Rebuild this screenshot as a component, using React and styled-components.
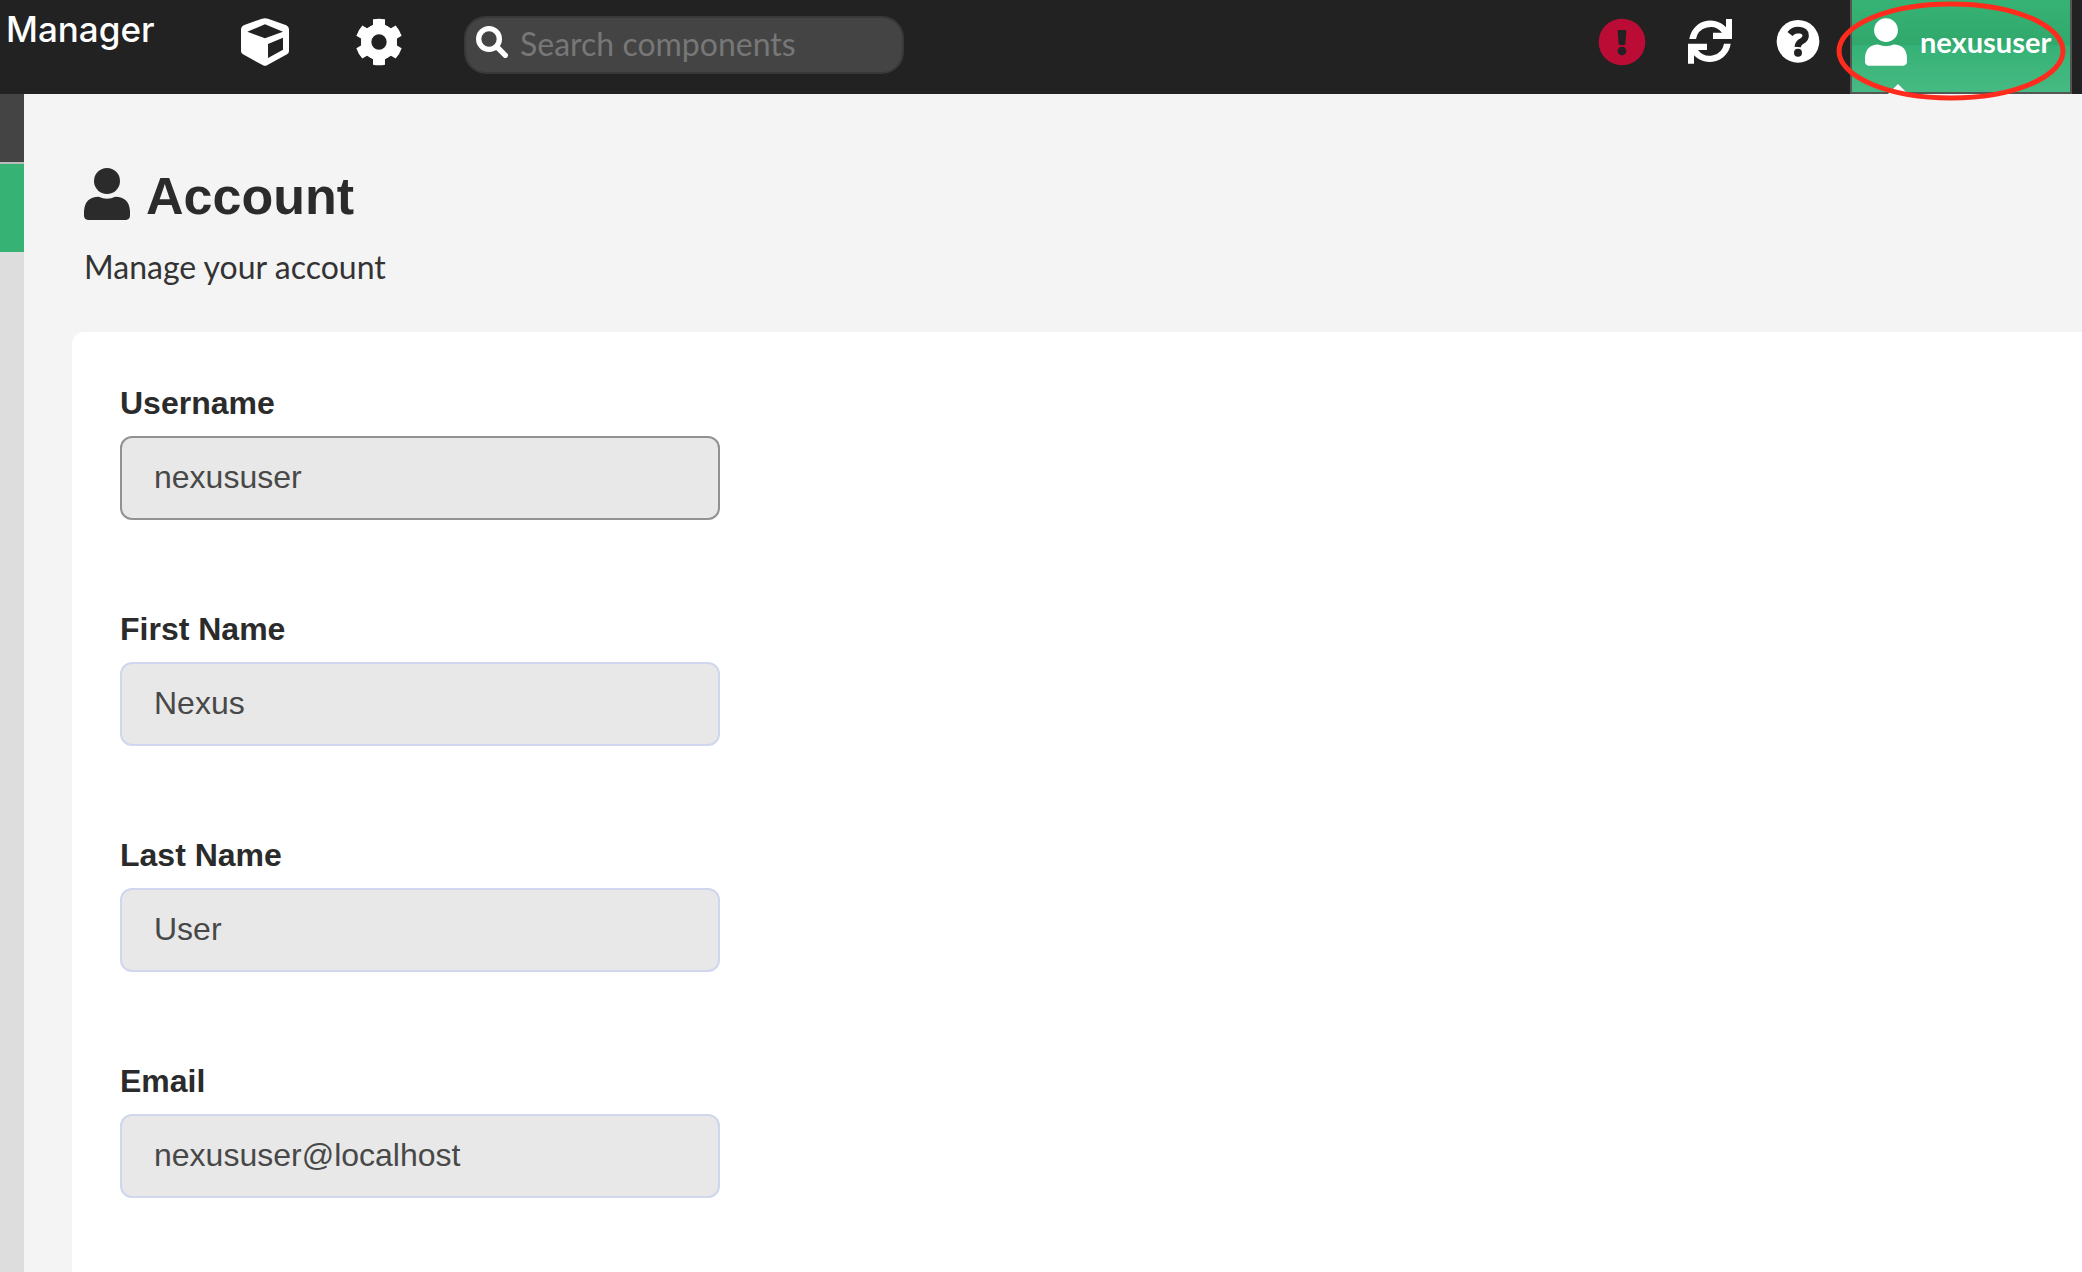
import React from 'react'
import styled, { createGlobalStyle } from 'styled-components'

const fields = [
    { id: 'username', label: 'Username', value: 'nexususer', active: true },
    { id: 'firstName', label: 'First Name', value: 'Nexus' },
    { id: 'lastName', label: 'Last Name', value: 'User' },
    { id: 'email', label: 'Email', value: 'nexususer@localhost' },
];

function UserIcon({ width, height }) {
    return (
        <svg width={width} height={height} viewBox="252 264 138 156" fill="currentColor" aria-hidden="true">
            <circle cx="321" cy="303" r="39" />
            <path d="M252 394Q254 351 296 350Q321 362 346 350Q388 351 390 394V408Q389 419 378 420H264Q253 419 252 408Z" />
        </svg>
    )
}

function CubeIcon() {
    return (
        <svg width="48" height="48" viewBox="723 54 144 144" fill="currentColor" aria-hidden="true">
            <path
                fillRule="evenodd"
                d="M786 56Q795 53 804 56L859 76Q867 80 867 88V153Q867 160 861 163L801 196Q795 199 789 196L729 163Q723 160 723 153V88Q723 80 731 76ZM742 95L795 115L849 95L795 73ZM804 132V174L849 149V113Z"
            />
        </svg>
    )
}

function CogIcon() {
    return (
        <svg width="46" height="48" viewBox="-69 -72 138 144" aria-hidden="true">
            <circle r="38" fill="none" stroke="currentColor" strokeWidth="30" />
            {[0, 60, 120, 180, 240, 300].map((angle) => (
                <path
                    key={angle}
                    d="M-18 -68Q0 -72 18 -68V-52L30 -44V-34H-30V-44L-18 -52Z"
                    fill="currentColor"
                    transform={`rotate(${angle})`}
                />
            ))}
        </svg>
    )
}

function SearchIcon() {
    return (
        <svg width="32" height="32" viewBox="108 78 96 96" fill="none" stroke="currentColor" aria-hidden="true">
            <circle cx="147" cy="117" r="31" strokeWidth="16" />
            <path d="M171 141L196 166" strokeWidth="16" strokeLinecap="round" />
        </svg>
    )
}

function AlertIcon() {
    return (
        <svg width="48" height="48" viewBox="114 54 144 144" aria-hidden="true">
            <circle cx="186" cy="126" r="70" fill="#ba0c35" />
            <path d="M176 90H196Q199 90 199 93L196 132Q196 135 193 135H179Q176 135 176 132L173 93Q173 90 176 90Z" fill="#222" />
            <circle cx="186" cy="153" r="13" fill="#222" />
        </svg>
    )
}

function RefreshIcon() {
    const arrow = 'M388 117A64 64 0 0 1 498 82V57H516V117H459V98H486A44 44 0 0 0 408 117Z';
    return (
        <svg width="48" height="48" viewBox="378 54 144 144" fill="currentColor" aria-hidden="true">
            <path d={arrow} />
            <path d={arrow} transform="rotate(180 450 124)" />
        </svg>
    )
}

function HelpIcon() {
    return (
        <svg width="48" height="48" viewBox="642 54 144 144" aria-hidden="true">
            <circle cx="714" cy="124" r="64" fill="#fff" />
            <path d="M690 102Q699 90 715 90Q737 91 737 107Q737 117 726 123Q714 129 713 141" fill="none" stroke="#222" strokeWidth="19" />
            <circle cx="714" cy="158" r="12" fill="#222" />
        </svg>
    )
}

function Header() {
    return (
        <Bar>
            <Brand>Manager</Brand>
            <ModeButton type="button" aria-label="Browse"><CubeIcon /></ModeButton>
            <ModeButton type="button" aria-label="Administration"><CogIcon /></ModeButton>
            <SearchBox>
                <SearchIcon />
                <input type="text" placeholder="Search components" aria-label="Search components" />
            </SearchBox>
            <Actions>
                <ActionButton type="button" aria-label="Status"><AlertIcon /></ActionButton>
                <ActionButton type="button" aria-label="Refresh"><RefreshIcon /></ActionButton>
                <ActionButton type="button" aria-label="Help"><HelpIcon /></ActionButton>
                <UserArea>
                    <UserButton type="button">
                        <UserIcon width={42} height={48} />
                        <span>nexususer</span>
                        <Pointer />
                    </UserButton>
                    <Marker viewBox="0 0 230 102" aria-hidden="true">
                        <ellipse cx="115" cy="51" rx="112" ry="47" />
                    </Marker>
                </UserArea>
            </Actions>
        </Bar>
    )
}

function App() {
    return (
        <Page>
            <GlobalStyle />
            <Header />
            <Body>
                <Rail>
                    <RailTitle />
                    <RailItem />
                </Rail>
                <Content>
                    <Title>
                        <UserIcon width={46} height={52} />
                        Account
                    </Title>
                    <Subtitle>Manage your account</Subtitle>
                    <Panel>
                        {fields.map((field) => (
                            <Field key={field.id}>
                                <label htmlFor={field.id}>{field.label}</label>
                                <TextInput id={field.id} type="text" defaultValue={field.value} readOnly $active={field.active} />
                            </Field>
                        ))}
                    </Panel>
                </Content>
            </Body>
        </Page>
    )
}

const GlobalStyle = createGlobalStyle`
    * {
        box-sizing: border-box;
    }

    body {
        margin: 0;
        font-family: "Liberation Sans", Arial, sans-serif;
        color: #2b2b2b;
    }

    button, input {
        font: inherit;
    }

    svg {
        display: block;
        flex-shrink: 0;
    }
`

const Page = styled.div`
    display: flex;
    flex-direction: column;
    min-height: 100vh;
`

const Bar = styled.header`
    display: flex;
    align-items: flex-start;
    height: 94px;
    background-color: #222;
    color: #fff;
    font-family: Lato, sans-serif;
`

const Brand = styled.div`
    width: 208px;
    padding: 7px 0 0 6px;
    font-family: Inter, sans-serif;
    font-size: 35px;
    font-weight: 500;
    line-height: 44px;
`

const ModeButton = styled.button`
    display: flex;
    align-items: center;
    justify-content: center;
    width: 114px;
    height: 84px;
    padding: 0;
    border: none;
    background: none;
    color: inherit;
    cursor: pointer;
`

const ActionButton = styled(ModeButton)`
    width: 88px;
`

const SearchBox = styled.div`
    display: flex;
    align-items: flex-start;
    gap: 12px;
    width: 440px;
    height: 58px;
    margin: 16px 0 0 28px;
    padding: 8px 10px;
    border: 2px solid #383838;
    border-radius: 22px;
    background-color: #444;

    input {
        flex: 1;
        min-width: 0;
        height: 38px;
        padding: 0 0 4px;
        border: none;
        outline: none;
        background: none;
        color: #fff;
        font-size: 32px;
        line-height: 34px;
    }

    input::placeholder {
        color: #777;
        opacity: 1;
    }
`

const Actions = styled.div`
    display: flex;
    margin-left: auto;
    padding-right: 10px;
`

const UserArea = styled.div`
    position: relative;
    margin-left: 8px;
`

const UserButton = styled.button`
    position: relative;
    display: flex;
    align-items: center;
    gap: 13px;
    width: 222px;
    height: 94px;
    padding: 0 0 8px 13px;
    border: 2px solid #555;
    border-top: none;
    background-image: linear-gradient(#36b374 0%, #31a86c 48%, #36b277 50%, #46ba82 100%);
    color: #fff;
    font-size: 29px;
    font-weight: 700;
    line-height: 36px;
    cursor: pointer;
`

const Pointer = styled.i`
    position: absolute;
    left: 36px;
    bottom: -2px;
    border: 10px solid transparent;
    border-top: none;
    border-bottom-color: #fff;
`

const Marker = styled.svg`
    position: absolute;
    top: 0;
    left: -14px;
    width: 230px;
    height: 102px;
    fill: none;
    stroke: #ff2c1e;
    stroke-width: 5px;
    pointer-events: none;
`

const Body = styled.div`
    display: flex;
    flex: 1;
`

const Rail = styled.aside`
    width: 24px;
    background-color: #ddd;
`

const RailTitle = styled.div`
    height: 70px;
    border-bottom: 2px solid #bbb;
    background-color: #444;
`

const RailItem = styled.div`
    height: 88px;
    background-color: #36b374;
`

const Content = styled.main`
    display: flex;
    flex: 1;
    flex-direction: column;
    padding: 74px 0 0 48px;
    background-color: #f4f4f4;
`

const Title = styled.h1`
    display: flex;
    align-items: flex-start;
    gap: 16px;
    margin: 0 0 23px;
    padding-left: 12px;
    font-size: 52px;
    line-height: 56px;
`

const Subtitle = styled.p`
    margin: 0 0 45px;
    padding-left: 12px;
    color: #333;
    font-family: Lato, sans-serif;
    font-size: 32px;
    line-height: 40px;
`

const Panel = styled.form`
    display: flex;
    flex: 1;
    flex-direction: column;
    gap: 90px;
    padding: 52px 48px;
    border-top-left-radius: 12px;
    background-color: #fff;
`

const Field = styled.div`
    display: flex;
    flex-direction: column;
    gap: 14px;

    label {
        font-size: 32px;
        font-weight: 700;
        line-height: 38px;
    }
`

const TextInput = styled.input`
    width: 600px;
    max-width: 100%;
    height: 84px;
    padding: 0 32px 2px;
    border: 2px solid ${(props) => (props.$active ? '#929292' : '#cfd6ee')};
    border-radius: 12px;
    outline: none;
    background-color: #e8e8e8;
    color: #484848;
    font-size: 32px;
`

export default App
